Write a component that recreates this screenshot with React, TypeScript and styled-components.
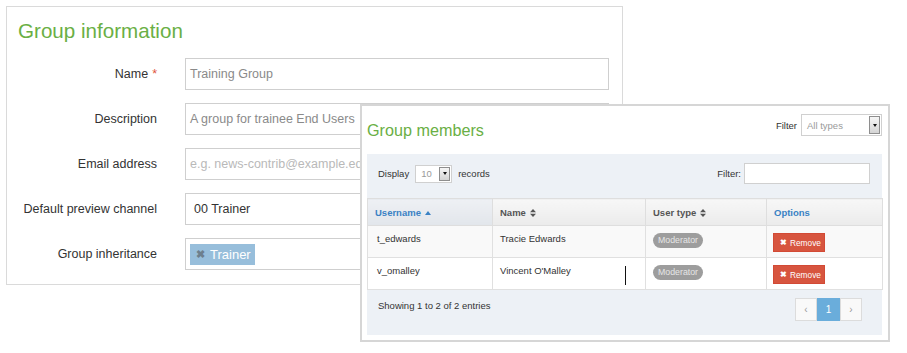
import React from 'react';
import styled, { createGlobalStyle } from 'styled-components';

const GlobalStyle = createGlobalStyle`
  body {
    margin: 0;
    background: #fff;
    font-family: 'Liberation Sans', Arial, sans-serif;
    color: #333;
  }
`;

const Page = styled.div`
  position: relative;
  box-sizing: border-box;
  width: 907px;
  height: 353px;
  padding: 6px 0 0 6px;
  overflow: hidden;
`;

/* ---------- group information form ---------- */

const InfoPanel = styled.section`
  box-sizing: border-box;
  width: 617px;
  height: 279px;
  border: 1px solid #dadada;
  padding: 12px 13px 0 0;
`;

const InfoTitle = styled.h2`
  margin: 0 0 15px 11px;
  font-size: 20.6px;
  line-height: 24px;
  font-weight: normal;
  color: #6aaf45;
`;

const Form = styled.div`
  display: grid;
  grid-template-columns: 150px 424px;
  column-gap: 28px;
  row-gap: 13px;
`;

const Label = styled.label`
  align-self: center;
  text-align: right;
  font-size: 12.5px;
  color: #333;
`;

const Required = styled.span`
  margin-left: 4px;
  color: #e0553b;
`;

const Field = styled.div<{ $tone?: 'value' | 'muted' | 'placeholder'; $inset?: number }>`
  box-sizing: border-box;
  display: flex;
  align-items: center;
  height: 32px;
  padding: 0 ${(p) => p.$inset ?? 4}px;
  border: 1px solid #cfcfcf;
  background: #fff;
  font-size: 12.5px;
  color: ${(p) => (p.$tone === 'value' ? '#333' : p.$tone === 'placeholder' ? '#b9b9b9' : '#8a8a8a')};
`;

const Chip = styled.span`
  display: inline-flex;
  align-items: center;
  gap: 5px;
  height: 21px;
  padding: 0 4px 0 6px;
  background: #97bedb;
  color: #fff;
  font-size: 13px;
  span {
    color: #6d7f8d;
    font-weight: bold;
    font-size: 11px;
  }
`;

/* ---------- group members overlay ---------- */

const MembersPanel = styled.section`
  position: absolute;
  left: 360px;
  top: 104px;
  box-sizing: border-box;
  width: 530px;
  height: 238px;
  display: flex;
  flex-direction: column;
  padding: 0 6px 5px 5px;
  background: #fff;
  border: 2px solid #d6d6d6;
  font-size: 9.5px;
`;

const MembersHeader = styled.div`
  display: flex;
  justify-content: space-between;
  height: 48px;
`;

const MembersTitle = styled.h3`
  align-self: center;
  margin: 0;
  font-size: 16.2px;
  font-weight: normal;
  color: #6aaf45;
`;

const TypeFilter = styled.div`
  display: flex;
  align-items: center;
  gap: 4px;
  margin-top: 8px;
  height: 22px;
  color: #333;
`;

const Select = styled.div<{ $width: number; $height: number }>`
  box-sizing: border-box;
  display: flex;
  align-items: center;
  justify-content: space-between;
  width: ${(p) => p.$width}px;
  height: ${(p) => p.$height}px;
  padding: 1px 1px 1px 5px;
  background: #fff;
  border: 1px solid #d0d0d0;
  color: #9a9a9a;
`;

const SelectArrow = styled.span`
  box-sizing: border-box;
  display: flex;
  align-items: center;
  justify-content: center;
  width: 11px;
  height: 100%;
  border: 1px solid #8e8e8e;
  background: linear-gradient(#f6f6f6, #d4d4d4);
  &::after {
    content: '';
    border-left: 2.5px solid transparent;
    border-right: 2.5px solid transparent;
    border-top: 3px solid #111;
  }
`;

const TableBox = styled.div`
  flex: 1;
  display: flex;
  flex-direction: column;
  background: #edf1f6;
`;

const Toolbar = styled.div`
  display: flex;
  justify-content: space-between;
  align-items: center;
  height: 21px;
  padding: 9px 12px 0 11px;
  margin-bottom: 14px;
`;

const ToolGroup = styled.div<{ $gap: number }>`
  display: flex;
  align-items: center;
  gap: ${(p) => p.$gap}px;
`;

const SearchInput = styled.div`
  box-sizing: border-box;
  width: 126px;
  height: 21px;
  background: #fff;
  border: 1px solid #d0d0d0;
`;

const Table = styled.table`
  width: 515px;
  border-collapse: collapse;
  table-layout: fixed;
  background: #fff;
`;

const Th = styled.th<{ $width: number; $sorted?: boolean; $link?: boolean }>`
  width: ${(p) => p.$width}px;
  height: 27px;
  box-sizing: border-box;
  padding: 0 7px;
  text-align: left;
  font-weight: bold;
  color: ${(p) => (p.$link ? '#3a82c4' : '#555')};
  background: ${(p) => (p.$sorted ? 'linear-gradient(#eef0f4, #e2e6eb)' : 'linear-gradient(#f7f7f7, #ebebeb)')};
  border: 1px solid #dedede;
  svg {
    margin-left: 4px;
    vertical-align: middle;
  }
`;

const Tr = styled.tr<{ $striped?: boolean }>`
  height: 32px;
  background: ${(p) => (p.$striped ? '#f9f9f9' : '#fff')};
`;

const Td = styled.td`
  box-sizing: border-box;
  padding: 7px 7px 0 7px;
  vertical-align: top;
  line-height: 12px;
  color: #333;
  border: 1px solid #e0e0e0;
  &:first-child {
    padding-left: 9px;
  }
`;

const Badge = styled.span`
  display: inline-block;
  box-sizing: border-box;
  width: 50px;
  height: 15px;
  line-height: 15px;
  text-align: center;
  border-radius: 8px;
  background: #9d9d9d;
  color: #e6e6e6;
  font-size: 8.8px;
`;

const RemoveButton = styled.button`
  box-sizing: border-box;
  display: inline-flex;
  align-items: center;
  gap: 3px;
  width: 52px;
  height: 19px;
  margin-left: -1px;
  padding: 0 0 0 6px;
  background: #d7553f;
  border: 1px solid #d24a35;
  color: #fff;
  font-family: inherit;
  font-size: 8.3px;
  b {
    font-size: 8px;
  }
`;

const Footer = styled.div`
  display: flex;
  justify-content: space-between;
  align-items: flex-start;
  padding: 8px 20px 0 11px;
  line-height: 16px;
`;

const Pager = styled.div`
  display: flex;
`;

const PageButton = styled.span<{ $active?: boolean }>`
  box-sizing: border-box;
  display: flex;
  align-items: center;
  justify-content: center;
  width: ${(p) => (p.$active ? 23 : 22)}px;
  height: 23px;
  border: 1px solid ${(p) => (p.$active ? '#6aaddb' : '#dcdcdc')};
  background: ${(p) => (p.$active ? '#6aaddb' : '#f9f9f9')};
  color: ${(p) => (p.$active ? '#fff' : '#999')};
  font-size: 10px;
`;

const TextCursor = styled.span`
  position: absolute;
  left: 625px;
  top: 266px;
  width: 1px;
  height: 19px;
  background: #111;
`;

const SortUp = () => (
  <svg width="6" height="4" viewBox="0 0 6 4">
    <path d="M0 4L3 0L6 4Z" fill="currentColor" />
  </svg>
);

const SortBoth = () => (
  <svg width="6" height="8" viewBox="0 0 6 8">
    <path d="M0 3.3L3 0L6 3.3Z M0 4.7L3 8L6 4.7Z" fill="currentColor" />
  </svg>
);

const members = [
  { username: 't_edwards', name: 'Tracie Edwards', type: 'Moderator' },
  { username: 'v_omalley', name: "Vincent O'Malley", type: 'Moderator' },
];

const App: React.FC = () => {
  return (
    <Page>
      <GlobalStyle />
      <InfoPanel>
        <InfoTitle>Group information</InfoTitle>
        <Form>
          <Label>
            Name<Required>*</Required>
          </Label>
          <Field>Training Group</Field>
          <Label>Description</Label>
          <Field>A group for trainee End Users</Field>
          <Label>Email address</Label>
          <Field $tone="placeholder">e.g. news-contrib@example.edu</Field>
          <Label>Default preview channel</Label>
          <Field $tone="value" $inset={8}>
            00 Trainer
          </Field>
          <Label>Group inheritance</Label>
          <Field>
            <Chip>
              <span>✖</span>Trainer
            </Chip>
          </Field>
        </Form>
      </InfoPanel>

      <MembersPanel>
        <MembersHeader>
          <MembersTitle>Group members</MembersTitle>
          <TypeFilter>
            Filter
            <Select $width={81} $height={22}>
              All types
              <SelectArrow />
            </Select>
          </TypeFilter>
        </MembersHeader>

        <TableBox>
          <Toolbar>
            <ToolGroup $gap={6}>
              Display
              <Select $width={37} $height={18}>
                10
                <SelectArrow />
              </Select>
              records
            </ToolGroup>
            <ToolGroup $gap={3}>
              Filter:
              <SearchInput />
            </ToolGroup>
          </Toolbar>

          <Table>
            <thead>
              <tr>
                <Th $width={125} $sorted $link>
                  Username
                  <SortUp />
                </Th>
                <Th $width={153}>
                  Name
                  <SortBoth />
                </Th>
                <Th $width={121}>
                  User type
                  <SortBoth />
                </Th>
                <Th $width={116} $link>
                  Options
                </Th>
              </tr>
            </thead>
            <tbody>
              {members.map((m, i) => (
                <Tr key={m.username} $striped={i % 2 === 0}>
                  <Td>{m.username}</Td>
                  <Td>{m.name}</Td>
                  <Td>
                    <Badge>{m.type}</Badge>
                  </Td>
                  <Td>
                    <RemoveButton>
                      <b>✖</b>Remove
                    </RemoveButton>
                  </Td>
                </Tr>
              ))}
            </tbody>
          </Table>

          <Footer>
            Showing 1 to 2 of 2 entries
            <Pager>
              <PageButton>‹</PageButton>
              <PageButton $active>1</PageButton>
              <PageButton>›</PageButton>
            </Pager>
          </Footer>
        </TableBox>
      </MembersPanel>

      <TextCursor />
    </Page>
  );
};

export default App;
